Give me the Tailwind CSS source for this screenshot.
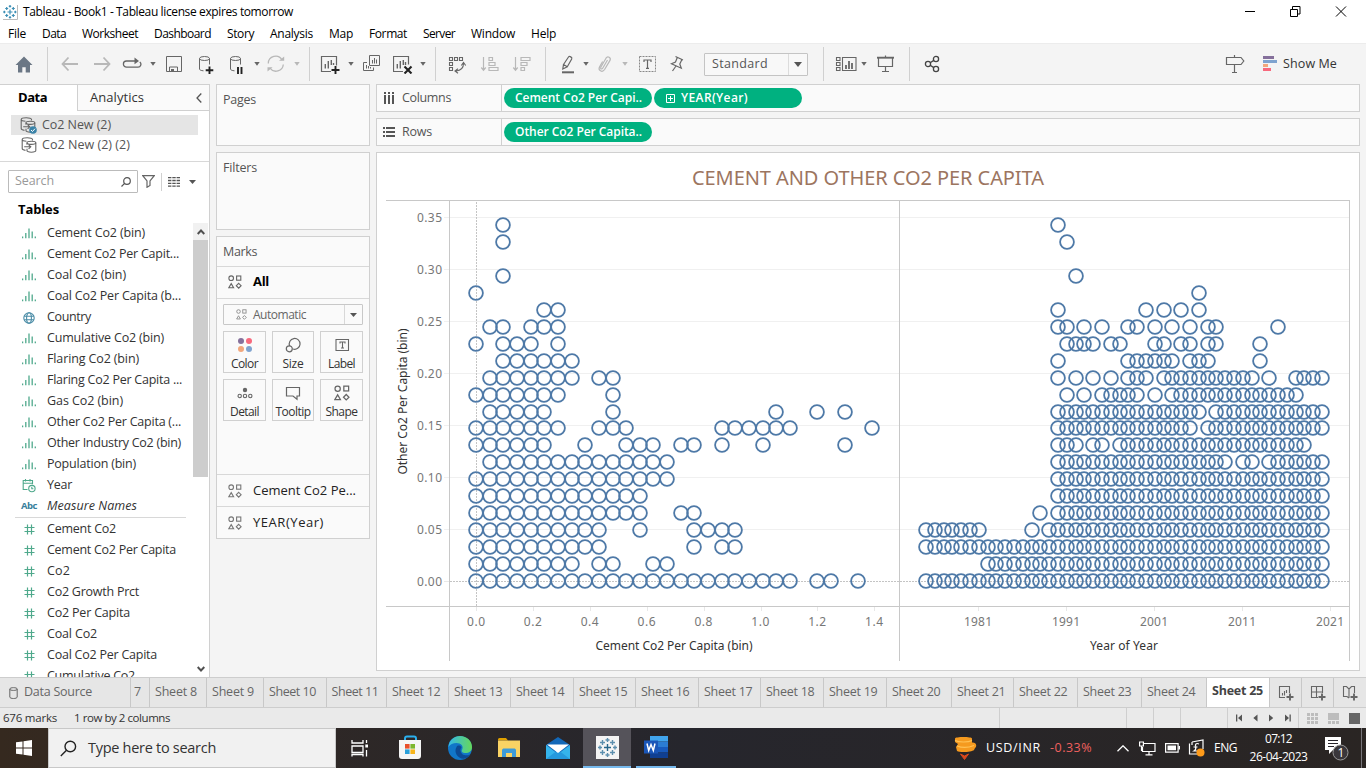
<!DOCTYPE html>
<html lang="en">
<head>
<meta charset="utf-8">
<title>Tableau - Book1</title>
<script src="https://cdn.jsdelivr.net/npm/@tailwindcss/browser@4"></script>
</head>
<body class="w-[1366px] h-[768px] overflow-hidden bg-[#f4f4f4] font-['Open_Sans','Noto_Sans',sans-serif] text-[#333] whitespace-nowrap">
<svg class="hidden">
  <symbol id="caret" viewBox="0 0 6 4"><path d="M0.3 0h5.4L3 3.8z" fill="currentColor"/></symbol>
  <symbol id="shapes" viewBox="0 0 14 14"><g fill="none" stroke="currentColor" stroke-width="1.1"><circle cx="3.2" cy="3.2" r="2.3"/><rect x="8.6" y="1" width="4.2" height="4.2"/><path d="M3.2 8.6L5.6 12.7H.8zM10.7 8.3l2.4 2.4-2.4 2.4-2.4-2.4z"/></g></symbol>
  <symbol id="bin" viewBox="0 0 14 11"><path d="M.6 8.6v1.7M3.8 5v5.3M7 .6v9.7M10.2 3.6v6.7M13.3 8.6v1.7" stroke="#4fa98c" stroke-width="1.3"/></symbol>
  <symbol id="hash" viewBox="0 0 11 11"><path d="M3.5.5v10M7.5.5v10M.5 3.5h10M.5 7.5h10" stroke="#4fa98c" stroke-width="1.2"/></symbol>
  <symbol id="globe" viewBox="0 0 12 12"><g fill="none" stroke="#4a8ca6" stroke-width="1.1"><circle cx="6" cy="6" r="5.2"/><ellipse cx="6" cy="6" rx="2.4" ry="5.2"/><path d="M1.2 4.2h9.6M1.2 7.8h9.6"/></g></symbol>
  <symbol id="date" viewBox="0 0 14 14"><g fill="none" stroke="#4fa98c" stroke-width="1.1"><path d="M5.5 10.5H1.2v-9h9.3v3.7M1.2 4.2h9.3M3.5 0v2.5M8 0v2.5"/><circle cx="9.9" cy="9.6" r="3.2"/><path d="M9.8 7.8v2h1.6"/></g></symbol>
  <symbol id="ds" viewBox="0 0 16 16"><g fill="none" stroke="#666" stroke-width="1.1"><path d="M11.5 3.5V2.4C11.5 1.4 9.2.7 6.3.7S1.2 1.4 1.2 2.4v9.2c0 1 1.3 1.6 3.3 1.8M1.2 2.4c0 1 2 1.7 4.3 1.8"/><ellipse cx="10.4" cy="5.8" rx="4.4" ry="1.6"/><path d="M6 5.8v2M14.8 5.8v7.8c0 1-2 1.6-4.4 1.6S6 14.6 6 13.6v-1.8M3.2 9.8h6.3M7.6 7.7l2.2 2.1-2.2 2.1"/></g></symbol>
</svg>
<div class="flex flex-col h-full">

<!-- window title -->
<div class="h-[24px] shrink-0 bg-white flex items-center text-black">
  <svg class="ml-[3px] w-[15px] h-[15px]" viewBox="0 0 15 15"><rect width="15" height="15" fill="#fff"/><path d="M14.5 0v14.5H0" fill="none" stroke="#bbb"/><g stroke="#3d8fb5" stroke-width="1.2"><path d="M7 4.6v5M4.5 7h5M7 0v2.6M5.8 1.4h2.4M7 11v2.6M5.8 12.5h2.4M0 7h2.6M1.4 5.8v2.4M11 7h2.6M12.4 5.8v2.4M3.7 2v3M2.2 3.5h3M10.3 2v3M8.8 3.5h3M3.7 9v3M2.2 10.5h3M10.3 9v3M8.8 10.5h3"/></g></svg>
  <span class="ml-[5px] text-[12px]" data-w="270">Tableau - Book1 - Tableau license expires tomorrow</span>
  <svg class="ml-auto mr-[19px] w-[102px] h-[12px] mb-[3px]" viewBox="0 0 102 12" fill="none" stroke="#000"><path d="M0 6.500h10M91 1.500l10 10M101 1.500l-10 10"/><path d="M45.500 4.500h7v7h-7zM47.500 4v-2.500h7.500v7.500h-2.500"/></svg>
</div>

<!-- menu -->
<div class="h-[19px] shrink-0 bg-white flex items-center text-[12px] text-black pl-[8px]">
  <span data-w="18" class="mr-[16px]">File</span><span data-w="24" class="mr-[16px]">Data</span><span data-w="56" class="mr-[16px]">Worksheet</span><span data-w="57" class="mr-[16px]">Dashboard</span><span data-w="27" class="mr-[16px]">Story</span><span data-w="43" class="mr-[16px]">Analysis</span><span data-w="24" class="mr-[16px]">Map</span><span data-w="38" class="mr-[16px]">Format</span><span data-w="32" class="mr-[16px]">Server</span><span data-w="44" class="mr-[16px]">Window</span><span data-w="25">Help</span>
</div>

<!-- toolbar -->
<div class="h-[41px] shrink-0 border-t border-[#ececec] flex items-center text-[#666] bg-[#f4f4f4]">
  <svg class="ml-[14px] w-5 h-5" viewBox="0 0 20 20"><path d="M10 2.500L18.500 11H16v7.500h-4.300v-5.300H8.300v5.300H4V11H1.500z" fill="#6b7785"/></svg>
  <i class="ml-[13px] w-px h-[34px] bg-[#d0d0d0]"></i>
  <svg class="ml-[12px] w-5 h-5 text-[#b8b8b8]" viewBox="0 0 20 20" fill="none" stroke="currentColor" stroke-width="1.800"><path d="M18 10H3M8.500 3.500L2.500 10l6 6.500"/></svg>
  <svg class="ml-[12px] w-5 h-5 text-[#b8b8b8]" viewBox="0 0 20 20" fill="none" stroke="currentColor" stroke-width="1.800"><path d="M2 10h15M11.500 3.500l6 6.500-6 6.500"/></svg>
  <svg class="ml-[10px] w-5 h-5" viewBox="0 0 20 20" fill="none" stroke="currentColor" stroke-width="1.300"><path d="M13 7H4.500a3 3 0 0 0 0 6.200h11.500a3 3 0 0 0 1.800-5.300"/><path d="M12.500 3.500L17 7l-4.500 3.300z" fill="currentColor" stroke="none"/></svg>
  <svg class="ml-[8px] w-[6px] h-[4px]"><use href="#caret"/></svg>
  <svg class="ml-[8px] w-5 h-5" viewBox="0 0 20 20" fill="none" stroke="currentColor"><path d="M2.500 2.500h15v15h-15zM5.500 17.500v-4.500h8v4.500"/><path d="M7 15h3v2.500H7z" fill="currentColor" stroke="none"/></svg>
  <svg class="ml-[12px] w-5 h-5" viewBox="0 0 20 20" fill="none" stroke="currentColor"><ellipse cx="8.500" cy="4.500" rx="5" ry="2"/><path d="M3.500 4.500v10.500c0 1 1.500 1.600 4 1.800M13.500 4.500v6"/><path d="M13.500 12.500v7.500M9.700 16.200h7.600" stroke="#222" stroke-width="1.900"/></svg>
  <svg class="ml-[11px] w-5 h-5" viewBox="0 0 20 20" fill="none" stroke="currentColor"><ellipse cx="8.500" cy="4.500" rx="5" ry="2"/><path d="M3.500 4.500v10.500c0 1 1.500 1.600 4 1.800M13.500 4.500v6"/><path d="M11 13v7M14.500 13v7" stroke="#222" stroke-width="1.900"/></svg>
  <svg class="ml-[7px] w-[6px] h-[4px]"><use href="#caret"/></svg>
  <svg class="ml-[6px] w-5 h-5 text-[#b8b8b8]" viewBox="0 0 20 20" fill="none" stroke="currentColor" stroke-width="1.300"><path d="M2.300 9.500A7.300 7.300 0 0 1 16 6M17.300 10.500A7.300 7.300 0 0 1 4 14"/><path d="M13 6.800h5.200V2.500zM6.600 13.200H1.500v4.300z" fill="currentColor" stroke="none"/></svg>
  <svg class="ml-[8px] w-[6px] h-[4px] text-[#b8b8b8]"><use href="#caret"/></svg>
  <i class="ml-[9px] w-px h-[34px] bg-[#d0d0d0]"></i>
  <svg class="ml-[10px] w-5 h-5" viewBox="0 0 20 20" fill="none" stroke="currentColor" stroke-width="1.200"><path d="M11 17.500H1.500v-15h15v9"/><path d="M5.300 10v4.500M8.300 7v7.500M11.300 6v5M13.500 9v2" stroke-width="1.400"/><path d="M15.500 12v8M11.500 16h8" stroke="#222" stroke-width="1.900"/></svg>
  <svg class="ml-[8px] w-[6px] h-[4px]"><use href="#caret"/></svg>
  <svg class="ml-[7px] w-5 h-5" viewBox="0 0 20 20" fill="none" stroke="currentColor"><path d="M8.500 1.500h10v10h-10zM6 8.500H2.500v8h10V13.500M11.500 6v3.500M13.500 4v5.500M15.500 5.500v4M5.500 11v3.500M7.500 12v2.500M9.500 13v1.500"/></svg>
  <svg class="ml-[12px] w-5 h-5" viewBox="0 0 20 20" fill="none" stroke="currentColor" stroke-width="1.200"><path d="M10 17.500H.5v-15h15v8"/><path d="M4.300 10v4.500M7.300 7v7.500M10.300 6v5M12.500 8v3" stroke-width="1.400"/><path d="M11.500 12.500l7 7M18.500 12.500l-7 7" stroke="#222" stroke-width="2.100"/></svg>
  <svg class="ml-[7px] w-[6px] h-[4px]"><use href="#caret"/></svg>
  <i class="ml-[9px] w-px h-[34px] bg-[#d0d0d0]"></i>
  <svg class="ml-[11px] w-5 h-5" viewBox="0 0 20 20" fill="none" stroke="currentColor" stroke-width="1.100"><path d="M2.500 3.500h3v3h-3zM7.500 3.500h3v3h-3zM12.500 3.500h3v3h-3zM2.500 8.500h3v3h-3zM2.500 13.500h3v3h-3z"/><path d="M16.500 9.500c0 4-2.500 7-7.500 7.500M14.300 11.500l2.200-3 2.200 3M11 14.800l-3 2.200 3 2.200"/></svg>
  <svg class="ml-[13px] w-5 h-5 text-[#b8b8b8]" viewBox="0 0 20 20" fill="none" stroke="currentColor" stroke-width="1.200"><path d="M3.500 3v13M1.300 13.500l2.200 2.700 2.200-2.700M9 3.500h3.500v3H9zM9 8.500h6v3H9zM9 13.500h9v3H9z"/></svg>
  <svg class="ml-[12px] w-5 h-5 text-[#b8b8b8]" viewBox="0 0 20 20" fill="none" stroke="currentColor" stroke-width="1.200"><path d="M3.500 3v13M1.300 13.500l2.200 2.700 2.200-2.700M9 3.500h9v3H9zM9 8.500h6v3H9zM9 13.500h3.500v3H9z"/></svg>
  <i class="ml-[13px] w-px h-[34px] bg-[#d0d0d0]"></i>
  <svg class="ml-[12px] w-5 h-5" viewBox="0 0 20 20" fill="none" stroke="currentColor" stroke-width="1.200"><path d="M5.500 10.500L10.500 3c1-1.300 4 .3 3.200 2L9.300 12.700zM5.500 10.500L4.800 15l4.500-2.300"/><path d="M4 18.300h12" stroke-width="2"/></svg>
  <svg class="ml-[5px] w-[6px] h-[4px]"><use href="#caret"/></svg>
  <svg class="ml-[6px] w-5 h-5 text-[#b8b8b8]" viewBox="0 0 20 20" fill="none" stroke="currentColor" stroke-width="1.200"><path d="M12.500 6l-4.800 8.200c-.9 1.500-2.600.6-1.900-1L11 4.200c1.700-2.500 5.300-.6 4 2.200L9.600 15.500c-2.300 3.500-6.900 1-5-2.800l3-5.200"/></svg>
  <svg class="ml-[7px] w-[6px] h-[4px] text-[#b8b8b8]"><use href="#caret"/></svg>
  <svg class="ml-[9px] w-5 h-5" viewBox="0 0 20 20" fill="none" stroke="currentColor"><rect x="2.500" y="2.500" width="16" height="15" stroke-dasharray="2 1" stroke="#888"/><path d="M7 8V6h7v2M10.500 6v8M9 14.300h3" stroke-width="1.200"/></svg>
  <svg class="ml-[10px] w-5 h-5" viewBox="0 0 20 20" fill="none" stroke="currentColor" stroke-width="1.200"><path d="M8.500 2.500l7.500 3.500M14.800 5.700L12.800 10l1.500 4.200L4.500 9.700 8.500 8l1.800-4.500M9 12l-3.500 5"/></svg>
  <div class="ml-[17px] w-[104px] h-[23px] shrink-0 border border-[#c4c4c4] rounded-[1px] bg-[#f8f8f8] flex items-center text-[12.500px] text-[#555]">
    <span class="ml-[7px]" data-w="56">Standard</span>
    <i class="ml-auto w-px h-full bg-[#dcdcdc]"></i>
    <svg class="mx-[5px] w-[8px] h-[5px]" viewBox="0 0 8 5"><path d="M0 0h8L4 5z" fill="#555"/></svg>
  </div>
  <i class="ml-[15px] w-px h-[34px] bg-[#d0d0d0]"></i>
  <svg class="ml-[12px] w-5 h-5 overflow-visible" viewBox="0 0 20 20" fill="none" stroke="currentColor" stroke-width="1.100"><path d="M.5 3.500h3.500v3H.5zM.5 8.500h3.500v3H.5zM.5 13.500h3.500v3H.5zM6.500 3.500h13.500v13h-13.500z"/><path d="M10 11v4M13 7v8M16 9v6" stroke-width="1.800"/></svg>
  <svg class="ml-[5px] w-[6px] h-[4px]"><use href="#caret"/></svg>
  <svg class="ml-[9px] w-5 h-5" viewBox="0 0 20 20" fill="none" stroke="currentColor" stroke-width="1.200"><path d="M1 3.700h17" stroke-width="1.900"/><path d="M2.500 4v8.500h14V4M9.500 1.500v2M9.500 12.500V17M6 17.500h7"/></svg>
  <i class="ml-[13px] w-px h-[34px] bg-[#d0d0d0]"></i>
  <svg class="ml-[12px] w-5 h-5" viewBox="0 0 20 20" fill="none" stroke="#444" stroke-width="1.300"><circle cx="6" cy="10" r="2.600"/><circle cx="14" cy="5" r="2.600"/><circle cx="14" cy="15" r="2.600"/><path d="M8.200 8.700l3.600-2.300M8.200 11.300l3.600 2.300"/></svg>
  <svg class="ml-auto w-5 h-5" viewBox="0 0 20 20" fill="none" stroke="currentColor" stroke-width="1.200"><path d="M1.500 3.500h14.500l2.800 3.500-2.800 3.500H1.500zM9.500 1v2.500M9.500 10.500V18M7 18.500h5"/></svg>
  <svg class="ml-[18px] w-[15px] h-[16px]" viewBox="0 0 15 16"><path d="M0 0h11v3H0z" fill="#85709b"/><path d="M0 4h14v3H0z" fill="#7fa3cf"/><path d="M0 8h5v3H0z" fill="#f2a77c"/><path d="M0 12h8v3H0z" fill="#f8697d"/></svg>
  <span class="ml-[5px] mr-[29px] text-[12.500px] text-[#333]" data-w="54">Show Me</span>
</div>

<!-- workspace -->
<div class="h-[593px] shrink-0 flex">

  <!-- data pane -->
  <div class="w-[210px] shrink-0 bg-white border-t border-r border-[#d0d0d0] flex flex-col overflow-hidden">
    <div class="h-[26px] shrink-0 flex">
      <div class="w-[77px] flex items-center pl-[18px] text-[13px] font-bold text-black"><span data-w="29">Data</span></div>
      <div class="flex-1 bg-[#fafafa] border-l border-b border-[#d0d0d0] flex items-center pl-[12px] text-[13px]"><span data-w="54">Analytics</span>
        <svg class="ml-auto mr-[7px] w-[6px] h-[10px]" viewBox="0 0 6 10" fill="none" stroke="#555" stroke-width="1.300"><path d="M5.300.5L1 5l4.300 4.500"/></svg></div>
    </div>
    <div class="h-[51px] shrink-0 pt-[4px] pl-[11px] pr-[11px] border-b border-[#d8d8d8] text-[12.500px] text-[#555]">
      <div class="h-[20px] bg-[#e5e5e5] flex items-center relative pl-[9px]"><svg class="w-4 h-4"><use href="#ds"/></svg><svg class="absolute left-[18px] top-[11px] w-[8px] h-[8px]" viewBox="0 0 8 8"><circle cx="4" cy="4" r="3.800" fill="#3a83a8"/><path d="M2 4l1.500 1.500L6 2.700" stroke="#fff" fill="none"/></svg><span class="ml-[6px]" data-w="69">Co2 New (2)</span></div>
      <div class="h-[20px] flex items-center pl-[10px]"><svg class="w-4 h-4"><use href="#ds"/></svg><span class="ml-[5px]" data-w="88">Co2 New (2) (2)</span></div>
    </div>
    <div class="mt-[8px] h-[23px] shrink-0 flex items-center pl-[8px]">
      <div class="w-[130px] h-[23px] border border-[#bbb] rounded-[1px] flex items-center px-[6px] text-[12.500px] text-[#999]"><span data-w="39">Search</span><svg class="ml-auto w-[10px] h-[10px]" viewBox="0 0 10 10" fill="none" stroke="#555" stroke-width="1.200"><circle cx="6" cy="4" r="3.300"/><path d="M3.600 6.400L.5 9.500"/></svg></div>
      <svg class="ml-[4px] w-[13px] h-[13px]" viewBox="0 0 13 13" fill="none" stroke="#666" stroke-width="1.200"><path d="M.8.700h11.400L8 6v4.500L5 12.300V6z"/></svg>
      <i class="ml-[6px] w-px h-[18px] bg-[#d0d0d0]"></i>
      <svg class="ml-[6px] w-[12px] h-[10px]" viewBox="0 0 12 10" stroke="#555" stroke-width="1.300"><path d="M0 .7h12M0 3.500h12M0 6.300h12M0 9.100h12" stroke-dasharray="3.400 .9"/></svg>
      <svg class="ml-[9px] w-[7px] h-[4px]" viewBox="0 0 7 4"><path d="M0 0h7L3.500 4z" fill="#555"/></svg>
    </div>
    <div class="h-[29px] shrink-0 flex items-center pl-[18px] pt-[4px] text-[13px] font-bold text-black"><span data-w="41">Tables</span></div>
    <div class="flex-1 flex overflow-hidden">
      <div id="fields" class="w-[193px] shrink-0 pt-px text-[12.500px] text-[#333]"></div>
      <div class="w-[15px] mt-px shrink-0 bg-white flex flex-col items-center">
        <div class="w-full h-[17px] shrink-0 bg-[#f1f1f1] flex items-center justify-center"><svg class="w-[8px] h-[6px]" viewBox="0 0 8 6" fill="none" stroke="#505050" stroke-width="1.900"><path d="M.7 5L4 1.500 7.300 5"/></svg></div>
        <div class="w-full h-[237px] shrink-0 bg-[#cdcdcd]"></div>
        <svg class="mt-auto mb-[5px] w-[8px] h-[6px]" viewBox="0 0 8 6" fill="none" stroke="#505050" stroke-width="1.900"><path d="M.7 1L4 4.500 7.300 1"/></svg>
      </div>
    </div>
  </div>

  <!-- cards -->
  <div class="ml-[6px] w-[154px] shrink-0 flex flex-col gap-[6px] text-[12.500px] text-[#555]">
    <div class="h-[62px] bg-[#fafafa] border border-[#d0d0d0] pl-[6px] pt-[6px]"><span data-w="33">Pages</span></div>
    <div class="h-[78px] bg-[#fafafa] border border-[#d0d0d0] pl-[6px] pt-[6px]"><span data-w="34">Filters</span></div>
    <div class="h-[303px] bg-[#fafafa] border border-[#d0d0d0] flex flex-col">
      <div class="h-[29px] shrink-0 pl-[6px] pt-[6px]"><span data-w="34">Marks</span></div>
      <div class="h-[33px] shrink-0 border-y border-[#d8d8d8] flex items-center pl-[11px] pb-px text-[13px] font-bold text-black"><svg class="w-[14px] h-[14px] text-[#666]"><use href="#shapes"/></svg><span class="ml-[11px]" data-w="16">All</span></div>
      <div class="mt-[5px] ml-[6px] w-[140px] h-[21px] shrink-0 border border-[#c8c8c8] rounded-[1px] flex items-center text-[12px] text-[#666]"><svg class="ml-[12px] w-[11px] h-[11px] text-[#888]"><use href="#shapes" width="11" height="11"/></svg><span class="ml-[6px]" data-w="53">Automatic</span><i class="ml-auto w-px h-full bg-[#d8d8d8]"></i><svg class="mx-[5px] w-[7px] h-[4px]" viewBox="0 0 7 4"><path d="M0 0h7L3.500 4z" fill="#555"/></svg></div>
      <div class="mt-[6px] ml-[6px] w-[140px] shrink-0 grid grid-cols-[43px_42px_43px] gap-[6px] text-[12px] leading-[15px] text-[#333]">
        <div class="h-[42px] border border-[#d0d0d0] flex flex-col items-center justify-between pt-[5px] pb-px"><svg class="w-[16px] h-[16px]" viewBox="0 0 16 16"><circle cx="4" cy="4" r="3" fill="#85709b"/><circle cx="12" cy="4" r="3" fill="#f8697d"/><circle cx="4" cy="12" r="3" fill="#f2a77c"/><circle cx="12" cy="12" r="3" fill="#7fa3cf"/></svg><span data-w="27">Color</span></div>
        <div class="h-[42px] border border-[#d0d0d0] flex flex-col items-center justify-between pt-[5px] pb-px"><svg class="w-[16px] h-[16px]" viewBox="0 0 16 16" fill="none" stroke="#666" stroke-width="1.200"><path d="M4.700 9A5.400 5.400 0 1 1 8 12"/><circle cx="4.300" cy="11.800" r="3"/></svg><span data-w="21">Size</span></div>
        <div class="h-[42px] border border-[#d0d0d0] flex flex-col items-center justify-between pt-[5px] pb-px"><svg class="w-[16px] h-[16px]" viewBox="0 0 16 16" fill="none" stroke="#666" stroke-width="1.100"><path d="M2 2.500h12.500v11H2zM6 6.500V5h5v1.500M8.500 5v6M7 11h3"/></svg><span data-w="27">Label</span></div>
        <div class="h-[42px] border border-[#d0d0d0] flex flex-col items-center justify-between pt-[5px] pb-px"><svg class="w-[16px] h-[16px]" viewBox="0 0 16 16" fill="none" stroke="#666" stroke-width="1.100"><circle cx="8" cy="5" r="2.200" fill="#666" stroke="none"/><circle cx="2.700" cy="11" r="1.700"/><circle cx="8" cy="11" r="1.700"/><circle cx="13.300" cy="11" r="1.700"/></svg><span data-w="29">Detail</span></div>
        <div class="h-[42px] border border-[#d0d0d0] flex flex-col items-center justify-between pt-[5px] pb-px"><svg class="w-[16px] h-[16px]" viewBox="0 0 16 16" fill="none" stroke="#666" stroke-width="1.200"><path d="M1.500 2.500h13v8.500h-2.500v3.300l-4-3.300H1.500z"/></svg><span data-w="35">Tooltip</span></div>
        <div class="h-[42px] border border-[#d0d0d0] flex flex-col items-center justify-between pt-[5px] pb-px"><svg class="w-[16px] h-[16px] text-[#666]"><use href="#shapes" width="16" height="16"/></svg><span data-w="32">Shape</span></div>
      </div>
      <div class="mt-auto h-[32px] shrink-0 border-t border-[#d8d8d8] flex items-center pl-[11px] text-[13px] text-[#222]"><svg class="w-[14px] h-[14px] text-[#777]"><use href="#shapes"/></svg><span class="ml-[11px]" data-w="103">Cement Co2 Pe...</span></div>
      <div class="h-[32px] shrink-0 border-t border-[#d8d8d8] flex items-center pl-[11px] text-[13px] text-[#222]"><svg class="w-[14px] h-[14px] text-[#777]"><use href="#shapes"/></svg><span class="ml-[11px]" data-w="71">YEAR(Year)</span></div>
    </div>
  </div>

  <!-- shelves and view -->
  <div class="ml-[6px] w-[984px] shrink-0 flex flex-col gap-[6px] text-[12.500px] text-[#555]">
    <div class="h-[28px] shrink-0 bg-[#fafafa] border border-[#d0d0d0] flex items-center">
      <div class="w-[125px] h-full shrink-0 border-r border-[#d0d0d0] flex items-center">
        <svg class="ml-[7px] w-[10px] h-[12px]" viewBox="0 0 10 12" stroke="#555" stroke-width="2"><path d="M1 0v2M1 3v9M5 0v2M5 3v9M9 0v2M9 3v9"/></svg>
        <span class="ml-[8px]" data-w="49">Columns</span>
      </div>
      <div class="ml-[2px] w-[148px] h-[20px] rounded-full bg-[#00b180] text-white text-[12px] font-semibold flex items-center pl-[11px]"><span data-w="127">Cement Co2 Per Capi..</span></div>
      <div class="ml-[2px] w-[148px] h-[20px] rounded-full bg-[#00b180] text-white text-[12px] font-semibold flex items-center pl-[12px]"><svg class="w-[9px] h-[9px]" viewBox="0 0 9 9" fill="none" stroke="#fff"><path d="M.5.500h8v8h-8zM2 4.500h5M4.500 2v5"/></svg><span class="ml-[6px]" data-w="67">YEAR(Year)</span></div>
    </div>
    <div class="h-[28px] shrink-0 bg-[#fafafa] border border-[#d0d0d0] flex items-center">
      <div class="w-[125px] h-full shrink-0 border-r border-[#d0d0d0] flex items-center">
        <svg class="ml-[6px] w-[12px] h-[10px]" viewBox="0 0 12 10" stroke="#555" stroke-width="2"><path d="M0 1h2M3 1h9M0 5h2M3 5h9M0 9h2M3 9h9"/></svg>
        <span class="ml-[7px]" data-w="30">Rows</span>
      </div>
      <div class="ml-[2px] w-[148px] h-[20px] rounded-full bg-[#00b180] text-white text-[12px] font-semibold flex items-center pl-[11px]"><span data-w="127">Other Co2 Per Capita..</span></div>
    </div>
    <div class="h-[519px] shrink-0 bg-white border border-[#d0d0d0]">
      <svg id="chart" class="block w-[982px] h-[517px]" viewBox="377 153 982 517"></svg>
    </div>
  </div>
</div>

<!-- sheet tabs -->
<div id="tabs" class="h-[31px] shrink-0 border-y border-[#cdcdcd] bg-[#e6e6e6] flex text-[12.500px] text-[#666]"></div>

<!-- status bar -->
<div class="h-[20px] shrink-0 bg-[#eaeaea] flex items-center text-[11.500px] text-[#333]">
  <span class="ml-[3px]" data-w="54">676 marks</span><span class="ml-[17px]" data-w="96">1 row by 2 columns</span>
  <div class="ml-auto h-full flex items-center">
    <i class="w-px h-full bg-[#cfcfcf]"></i><i class="ml-[126px] w-px h-full bg-[#cfcfcf]"></i><i class="ml-[26px] w-px h-full bg-[#cfcfcf]"></i><i class="ml-[26px] w-px h-full bg-[#cfcfcf]"></i><i class="ml-[46px] w-px h-full bg-[#cfcfcf]"></i>
    <svg class="ml-[8px] w-[56px] h-[8px]" viewBox="0 0 56 8" fill="#555"><path d="M0 .5h1.300v7H0zM6 .5v7L2 4zM21.500.5v7L17.300 4zM33 .5v7L37.200 4zM49 .5v7L53 4zM53.500.5h1.300v7h-1.300z"/></svg>
    <i class="ml-[6px] w-px h-full bg-[#cfcfcf]"></i>
    <svg class="ml-[8px] mr-[6px] w-[53px] h-[11px]" viewBox="0 0 53 11"><path d="M0 0h3v3H0zM4 0h3v3H4zM8 0h3v3H8zM0 4h3v3H0zM4 4h3v3H4zM8 4h3v3H8zM0 8h3v3H0zM4 8h3v3H4zM8 8h3v3H8zM21 0h11v7H21zM21 8h3v3h-3zM25 8h3v3h-3zM29 8h3v3h-3z" fill="#bdbdbd"/><path d="M42 0h11v11H42z" fill="#666"/></svg>
  </div>
</div>

<!-- taskbar -->
<div class="h-[40px] shrink-0 flex items-center bg-linear-to-r from-[#35291f] via-[#26262d] to-[#2a2523] from-0% via-50% to-100% text-white">
  <svg class="ml-[16px] mr-[16px] w-4 h-4" viewBox="0 0 16 16" fill="#fff"><path d="M0 2.300l6.500-.9v6.100H0zM7.500 1.200L16 0v7.500H7.500zM0 8.500h6.500v6.100L0 13.700zM7.500 8.500H16V16l-8.500-1.200z"/></svg>
  <div class="w-[288px] h-full bg-[#f1f1f1] border border-[#c8c8c8] flex items-center text-[#333] text-[14.500px]">
    <svg class="ml-[11px] w-[17px] h-[17px]" viewBox="0 0 17 17" fill="none" stroke="#222" stroke-width="1.400"><circle cx="10.300" cy="6.500" r="5.300"/><path d="M6.500 10.300L.8 16"/></svg>
    <span class="ml-[11px]" data-w="128">Type here to search</span>
  </div>
  <svg class="ml-[14px] w-[20px] h-[20px]" viewBox="0 0 20 20" fill="none" stroke="#fff" stroke-width="1.300"><path d="M2 2v3h11V2M2 8h11v6.500H2zM2 18.500v-2h11v2M16.500 2v3M16.500 12v6.500"/><path d="M15.300 6.500h2.700v3h-2.700z" fill="#fff" stroke="none"/></svg>
  <svg class="ml-[27px] w-[26px] h-[26px]" viewBox="0 0 26 26"><path d="M8 7V3.500C8 2 9 1.500 10 1.500h7c1 0 2 .5 2 2V7" fill="none" stroke="#2bb0ee" stroke-width="2"/><path d="M2 5h22v16c0 2-1.500 3-3 3H5c-2 0-3-1-3-3z" fill="#f5f5f5"/><path d="M8 9h4.600v4.600H8z" fill="#e9502b"/><path d="M13.400 9H18v4.600h-4.600z" fill="#7db72f"/><path d="M8 14.400h4.600V19H8z" fill="#2aa0da"/><path d="M13.400 14.400H18V19h-4.600z" fill="#f7b51b"/></svg>
  <svg class="ml-[24px] w-[26px] h-[26px]" viewBox="0 0 26 26"><defs><linearGradient id="eg" x1="0" x2="1"><stop offset="0" stop-color="#35b8e8"/><stop offset="1" stop-color="#66d85a"/></linearGradient></defs><circle cx="13" cy="13" r="12" fill="#1176c8"/><path d="M1.500 12C2 5 7 1 13 1c7 0 12 5 12 11 0 4-3 6-6.500 6-3 0-4.500-1.500-3.500-3 2-4-1-7-5.500-7-3.500 0-6.500 1.500-8 4z" fill="url(#eg)"/><path d="M9.500 12c-3 5 1 11.500 7 11.800 3-.3 5-2 6.500-4.300-4 2-9 .5-9.500-4-.2-1.500.5-2.500 1-3-1-2.500-4-2.500-5-.5z" fill="#0c4a94"/></svg>
  <svg class="ml-[25px] w-[22px] h-[20px]" viewBox="0 0 22 20"><path d="M0 1.500C0 1 .5 0 1.500 0H8l2 2.500H0z" fill="#e0a100"/><path d="M0 2.500h22V19H0z" fill="#fad364"/><path d="M4 19v-6.500C4 11 5 10.500 6 10.500h10c1 0 2 .5 2 2V19h-4v-4H8v4z" fill="#3d9bd9"/></svg>
  <svg class="ml-[25px] w-[26px] h-[24px]" viewBox="0 0 26 24"><path d="M1 9L13 1l12 8v14H1z" fill="#1268b8"/><path d="M1 9l12 9L25 9v14H1z" fill="#35b4ec"/><path d="M1 23L13 14l12 9z" fill="#2599dd"/><path d="M2 8.500h22L13 17z" fill="#fff"/></svg>
  <div class="ml-[12px] w-[48px] h-full bg-[#55535a] border-b-2 border-[#76b9ed] flex items-center justify-center"><svg class="w-[23px] h-[23px]" viewBox="0 0 23 23"><path d="M0 0h23v23H0z" fill="#f4f4f4"/><g stroke="#5d8fae" stroke-width="1.400" fill="none"><path d="M11.500 8v7M8 11.500h7" stroke="#27668a"/><path d="M11.500 2v4M9.500 4h4M11.500 17v4M9.500 19h4M2 11.500h4M4 9.500v4M17 11.500h4M19 9.500v4M6.500 4v5M4 6.500h5M16.500 4v5M14 6.500h5M6.500 14v5M4 16.500h5M16.500 14v5M14 16.500h5"/></g></svg></div>
  <div class="ml-[5px] w-[40px] h-full border-b-2 border-[#76b9ed] flex items-center justify-center"><svg class="w-[24px] h-[22px]" viewBox="0 0 24 22"><path d="M6 0h18v5.500H6z" fill="#41a5ee"/><path d="M6 5.500h18V11H6z" fill="#2b7cd3"/><path d="M6 11h18v5.500H6z" fill="#185abd"/><path d="M6 16.500h18V22H6z" fill="#103f91"/><path d="M0 4.500h14v13H0z" fill="#1a56b8"/><path d="M3 7.500l1.700 7L7 8.500l2.300 6 1.700-7" fill="none" stroke="#fff" stroke-width="1.500"/></svg></div>
  <svg class="ml-auto w-[24px] h-[24px]" viewBox="0 0 24 24"><path d="M2 2.500C2 .5 19 .5 19 2.500v4C24 6 24 11 22 12l-1 2c-2 2-14 3-17 1l-1-4 2-3-3-2z" fill="#f59a1f"/><path d="M2 4.500c4 2 13 2 17 0M4 10c5 2 12 1.500 17-.5" fill="none" stroke="#ffc154" stroke-width="1.200"/><path d="M7.500 18l4 2 4-2-4 5.500z" fill="#d9481c" stroke="#d9481c"/></svg>
  <span class="ml-[9px] text-[12.500px]" data-w="55">USD/INR</span>
  <span class="ml-[9px] text-[12.500px] text-[#f0605f]" data-w="42">-0.33%</span>
  <svg class="ml-[25px] w-[12px] h-[7px]" viewBox="0 0 12 7" fill="none" stroke="#fff" stroke-width="1.300"><path d="M.5 6.300L6 .8l5.500 5.500"/></svg>
  <svg class="ml-[10px] w-[17px] h-[15px]" viewBox="0 0 17 15" fill="none" stroke="#fff" stroke-width="1.200"><path d="M5 2.500h11v8H3.500V6M10 10.500v3M6.500 13.800h7M.6 1h3.800v4H.6zM2.500 5v5"/></svg>
  <svg class="ml-[9px] w-[15px] h-[10px]" viewBox="0 0 15 10"><path d="M.6.600h12.500v8.500H.6z" fill="none" stroke="#fff" stroke-width="1.200"/><path d="M2.500 2.500h8.500v4.800H2.500zM13.500 3H15v3.500h-1.500z" fill="#fff"/></svg>
  <svg class="ml-[8px] w-[18px] h-[18px]" viewBox="0 0 18 18" fill="none" stroke="#fff" stroke-width="1.200"><path d="M4 3l11-2v9M4 15H1.500V4.500M4 3v3M4 15h5"/><path d="M11 5c-3-1.500-4.500 1-3 2.500M5.500 8h4M7.500 8c1 2 0 3-1.500 4h4"/><circle cx="12.500" cy="13.500" r="4" fill="#ff9b1a" stroke="none"/></svg>
  <span class="ml-[8px] text-[12px]" data-w="23">ENG</span>
  <div class="ml-[12px] w-[59px] flex flex-col items-center text-[12px] leading-[18px]"><span data-w="27">07:12</span><span data-w="58">26-04-2023</span></div>
  <svg class="ml-[16px] w-[26px] h-[26px]" viewBox="0 0 26 26"><path d="M1 2h16v13H9l-4 4v-4H1z" fill="#fff"/><path d="M4 5.500h10M4 8.500h10M4 11.500h6" stroke="#26242a" stroke-width="1.200"/><circle cx="16.500" cy="17.500" r="7.500" fill="#3a373b" stroke="#999"/><text x="13.500" y="22" font-size="12" fill="#fff">1</text></svg>
  <i class="ml-[11px] mr-[4px] w-px h-full bg-[#77757a]"></i>
</div>
</div>

<script>
// Data pane fields: [icon, label, label width]
const fields = [
 ['bin','Cement Co2 (bin)',98],['bin','Cement Co2 Per Capit...',132],['bin','Coal Co2 (bin)',79],['bin','Coal Co2 Per Capita (b...',134],
 ['globe','Country',44],['bin','Cumulative Co2 (bin)',117],['bin','Flaring Co2 (bin)',92],['bin','Flaring Co2 Per Capita ...',135],
 ['bin','Gas Co2 (bin)',76],['bin','Other Co2 Per Capita (...',134],['bin','Other Industry Co2 (bin)',134],['bin','Population (bin)',89],
 ['date','Year',25],['abc','Measure Names',90],null,
 ['hash','Cement Co2',69],['hash','Cement Co2 Per Capita',129],['hash','Co2',23],['hash','Co2 Growth Prct',92],['hash','Co2 Per Capita',83],
 ['hash','Coal Co2',50],['hash','Coal Co2 Per Capita',110],['hash','Cumulative Co2',88]];
const icons = {
 bin:'<svg class="w-[14px] h-[11px]"><use href="#bin"/></svg>',
 globe:'<svg class="w-[12px] h-[12px]"><use href="#globe"/></svg>',
 date:'<svg class="w-[14px] h-[14px]"><use href="#date"/></svg>',
 hash:'<svg class="w-[11px] h-[11px]"><use href="#hash"/></svg>',
 abc:'<span class="text-[9.500px] font-bold text-[#3a7f9c]" data-w="16">Abc</span>'};
document.getElementById('fields').innerHTML = fields.map(f => f
 ? `<div class="h-[21px] flex items-center"><div class="w-[18px] ml-[20px] mr-[9px] flex justify-center shrink-0">${icons[f[0]]}</div><span class="${f[0]==='abc'?'italic':''}" data-w="${f[2]}">${f[1]}</span></div>`
 : '<div class="h-[2px] ml-[15px] w-[171px] border-t border-[#d8d8d8]"></div>').join('');

// Sheet tabs, sized by their right edges
const edges = [131,150,207,264,326.5,387,449,511,574,636,699,761,824,887,952,1014,1078,1142,1207,1270];
let tabs = '', prev = 0;
edges.forEach((e, i) => {
  const w = e - prev; prev = e;
  if (i === 0) tabs += `<div class="h-full shrink-0 border-r border-[#c8c8c8] flex items-center pl-[9px]" style="width:${w}px"><svg class="w-[9px] h-[12px]" viewBox="0 0 9 12" fill="none" stroke="#666"><path d="M.8 2v8c0 2 7.400 2 7.400 0V2c0-1.800-7.400-1.800-7.400 0zM.8 2.200c0 1.600 7.400 1.600 7.400 0"/></svg><span class="ml-[6px]" data-w="68">Data Source</span></div>`;
  else {
    const label = i === 1 ? '7' : 'Sheet ' + (i + 6), tw = i === 1 ? 6 : i < 4 ? 42 : i === 19 ? 51 : i === 5 || i === 4 ? 47 : 48.5;
    tabs += `<div class="h-full shrink-0 border-r border-[#c8c8c8] flex items-center pl-[5px] ${i === 19 ? 'bg-white font-bold text-[#444] pb-[2px]' : ''}" style="width:${w}px"><span class="${i === 1 ? 'ml-[-2px]' : ''}" data-w="${tw}">${label}</span></div>`;
  }
});
tabs += `<div class="w-[32px] h-full border-r border-[#c8c8c8] flex items-center justify-center"><svg class="w-[16px] h-[16px]" viewBox="0 0 16 16" fill="none" stroke="#666" stroke-width="1.100"><path d="M7 12.500H1.500v-11h10V8M4.500 8v2.500M6.500 6v4.500M8.500 5v3"/><path d="M12 8.500v7M8.500 12h7" stroke-width="1.900"/></svg></div>
<div class="w-[32px] h-full border-r border-[#c8c8c8] flex items-center justify-center"><svg class="w-[16px] h-[16px]" viewBox="0 0 16 16" fill="none" stroke="#666" stroke-width="1.100"><path d="M8 12.500H1.500v-11h11V8M1.500 7h11M6.500 1.500v11"/><path d="M12 8.500v7M8.500 12h7" stroke-width="1.900"/></svg></div>
<div class="w-[32px] h-full flex items-center justify-center"><svg class="w-[16px] h-[16px]" viewBox="0 0 16 16" fill="none" stroke="#666" stroke-width="1.100"><path d="M7 13V4L4.500 1.500H1.500v10H5L7 13M7 4l2.500-2.500h3V8"/><path d="M12 8.500v7M8.500 12h7" stroke-width="1.900"/></svg></div>`;
document.getElementById('tabs').innerHTML = tabs;

// Scatter: ranges of filled bins per row, row 0 at the bottom
const left = {21:'2',20:'2',18:'2',17:'0',16:'5-6',15:'1-2,4-6',14:'0,2-4,6',13:'2-7',12:'1-7,9-10',11:'0-6,10',10:'1-5,10,22,25,27',9:'0-6,9-11,18-23,29',
 8:'0-5,8,11-13,15-16,18,21,27',7:'1-14',6:'0-14',5:'0-12',4:'0-12,15-16',3:'0-9,12,16-19',2:'0-9,16,18-19',1:'0-7,9-10,13-14',0:'0-23,25-26,28'};
const right = {21:'1990',20:'1991',18:'1992',17:'2006',16:'1990,2000,2002,2004,2006',15:'1990-1991,1993,1995,1998-1999,2001,2003,2005,2007-2008,2015',
 14:'1991-1994,1996-1997,2001-2002,2004-2005,2007-2008,2013',13:'1990,1998-2003,2005-2007,2013',12:'1990,1992,1994,1996,1998-2000,2002-2012,2014,2017-2020',
 11:'1991,1993,1995-1999,2001,2003-2017',10:'1990-2006,2008-2020',9:'1990-2005,2007-2020',8:'1990-1992,1994-1995,1997-2018',7:'1990-2009,2011-2012,2014-2020',
 6:'1990-2020',5:'1990-2020',4:'1988,1990-2020',3:'1975-1981,1987,1989-2020',2:'1975-2020',1:'1982-2020',0:'1975-2020'};
const expand = s => s.split(',').flatMap(p => { const [a, b = a] = p.split('-').map(Number); return Array.from({length: b - a + 1}, (_, i) => a + i); });
let lines = '', labels = '', marks = '';
for (let i = 0; i < 8; i++) {
  const y = 217.5 + 52 * i;
  if (i < 7) lines += `<path d="M444 ${y}H1349" stroke="#f0f0f0"/>`;
  labels += `<text x="442" y="${y + 4}" text-anchor="end" textLength="25" fill="#777">${((7 - i) * 0.05).toFixed(2)}</text>`;
}
lines += '<path d="M444 581.500h5M476.500 607v4M533.500 607v4M590.500 607v4M647.500 607v4M704.500 607v4M761.500 607v4M817.500 607v4M874.500 607v4M978.500 607v4M1066.500 607v4M1154.500 607v4M1242.500 607v4M1330.500 607v4" stroke="#e8e8e8"/>';
lines += '<path d="M450 581.500H1349M476.500 202V606" stroke="#c4c4c4" stroke-dasharray="2 1"/>';
lines += '<path d="M386 200.500H1350M386 606.500H1350M449.500 200V661M899.500 200V661M1349.500 200V661" stroke="#c8c8c8"/>';
[0,.2,.4,.6,.8,1,1.2,1.4].forEach((v, i) => labels += `<text x="${476 + 56.86 * i}" y="626" text-anchor="middle" textLength="18" fill="#777">${v.toFixed(1)}</text>`);
[1981,1991,2001,2011,2021].forEach((v, i) => labels += `<text x="${978 + 88 * i}" y="626" text-anchor="middle" textLength="28" fill="#777">${v}</text>`);
labels += '<text x="868" y="185" text-anchor="middle" textLength="352" font-size="20" fill="#9c755f">CEMENT AND OTHER CO2 PER CAPITA</text>';
labels += '<text x="674" y="650" text-anchor="middle" textLength="157" fill="#333">Cement Co2 Per Capita (bin)</text><text x="1124" y="650" text-anchor="middle" textLength="68" fill="#333">Year of Year</text>';
labels += '<text transform="translate(407 401.500) rotate(-90)" text-anchor="middle" textLength="146" fill="#333">Other Co2 Per Capita (bin)</text>';
for (let k = 0; k < 22; k++) {
  const y = Math.round(581 - 16.95 * k);
  if (left[k]) expand(left[k]).forEach(i => marks += `<circle cx="${Math.round(475.9 + 13.66 * i)}" cy="${y}" r="6.900"/>`);
  if (right[k]) expand(right[k]).forEach(n => marks += `<circle cx="${Math.round(1066.7 + 8.8 * (n - 1991))}" cy="${y}" r="6.900"/>`);
}
document.getElementById('chart').innerHTML = `<g fill="none">${lines}</g><g fill="none" stroke="#4e79a7" stroke-width="1.800">${marks}</g><g font-family="Noto Sans, sans-serif" font-size="12">${labels}</g>`;

function fit() {
  document.querySelectorAll('[data-w]').forEach(e => {
    e.style.display = 'inline-block';
    e.style.letterSpacing = '0px';
    const d = (e.dataset.w - e.getBoundingClientRect().width) / e.textContent.length;
    e.style.letterSpacing = d.toFixed(3) + 'px';
  });
}
fit();
new ResizeObserver(fit).observe(document.body);
addEventListener('load', fit);
document.fonts.ready.then(fit);
setTimeout(fit, 50);
setTimeout(fit, 300);
</script>
</body>
</html>
